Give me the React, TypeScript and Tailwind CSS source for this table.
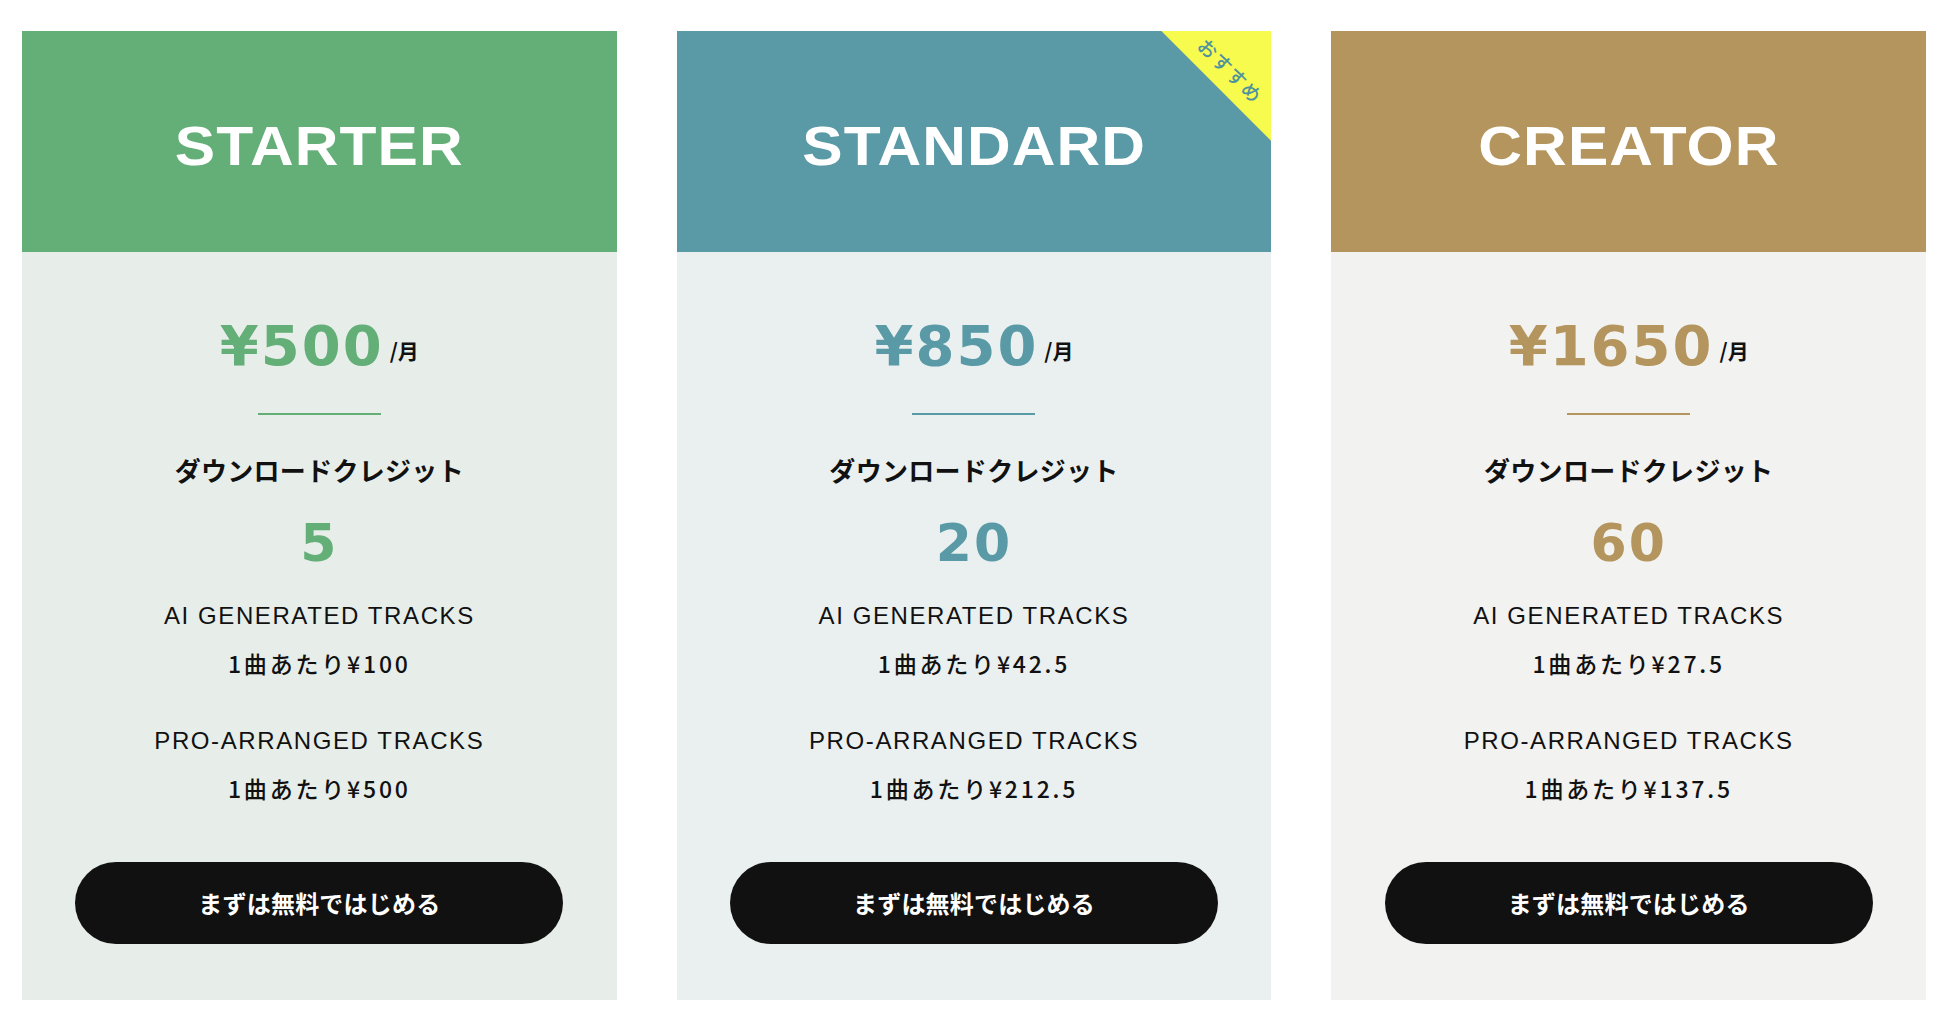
const plans = [
  {
    name: "STARTER",
    price: "¥500",
    credits: "5",
    ai: "1曲あたり¥100",
    pro: "1曲あたり¥500",
    head: "bg-[#64ae77]",
    body: "bg-[#e7eeea]",
    text: "text-[#64ae77]",
    line: "bg-[#64ae77]",
    badge: false,
  },
  {
    name: "STANDARD",
    price: "¥850",
    credits: "20",
    ai: "1曲あたり¥42.5",
    pro: "1曲あたり¥212.5",
    head: "bg-[#5a9aa6]",
    body: "bg-[#eaf0f0]",
    text: "text-[#5a9aa6]",
    line: "bg-[#5a9aa6]",
    badge: true,
  },
  {
    name: "CREATOR",
    price: "¥1650",
    credits: "60",
    ai: "1曲あたり¥27.5",
    pro: "1曲あたり¥137.5",
    head: "bg-[#b4955e]",
    body: "bg-[#f2f2f1]",
    text: "text-[#b4955e]",
    line: "bg-[#b4955e]",
    badge: false,
  },
];

const sans = "font-['Liberation_Sans','Noto_Sans_CJK_JP',sans-serif]";
const jp = "font-['Noto_Sans_CJK_JP',sans-serif]";
const wide = "font-['DejaVu_Sans',sans-serif]";

export default function App() {
  return (
    <div className="min-h-screen bg-white pl-[22px] pr-[24px] pt-[31px]">
      <div className="grid grid-cols-3 gap-[60px]">
        {plans.map((p) => (
          <div key={p.name} className="flex flex-col">
            {/* Header */}
            <div className={`relative flex h-[221px] items-center justify-center overflow-hidden ${p.head}`}>
              <h2 className={`${sans} scale-x-110 pt-[10px] text-[55px] font-bold leading-none tracking-[1px] text-white`}>
                {p.name}
              </h2>
              {p.badge && (
                <div className="absolute right-0 top-0 h-[110px] w-[110px] bg-[#f7fb4e] [clip-path:polygon(0_0,100%_0,100%_100%)]">
                  <span
                    className={`${jp} absolute left-[70px] top-[39px] -translate-x-1/2 -translate-y-1/2 rotate-45 whitespace-nowrap text-[19px] font-medium leading-none tracking-[1.5px] text-[#4f929f]`}
                  >
                    おすすめ
                  </span>
                </div>
              )}
            </div>

            {/* Body */}
            <div className={`flex flex-col items-center pb-[56px] pt-[66px] text-[#111] ${p.body}`}>
              <div className="flex items-end">
                <span className={`${wide} text-[56px] font-bold leading-[56px] tracking-[2px] ${p.text}`}>
                  {p.price}
                </span>
                <span className={`${jp} ml-[6px] pb-[13px] text-[21px] font-bold leading-[22px]`}>/月</span>
              </div>

              <div className={`mt-[39px] h-[2px] w-[123px] ${p.line}`} />

              <div className={`${jp} mt-[42px] text-[26px] font-semibold leading-[26px] tracking-[0.3px]`}>
                ダウンロードクレジット
              </div>

              <div className={`${wide} mt-[34px] text-[52px] font-bold leading-[52px] tracking-[2px] ${p.text}`}>
                {p.credits}
              </div>

              <div className={`${sans} mt-[35px] text-[24px] leading-[23px] tracking-[1.6px]`}>
                AI GENERATED TRACKS
              </div>
              <div className={`${jp} mt-[25px] text-[23px] font-medium leading-[22px] tracking-[2.8px]`}>
                {p.ai}
              </div>

              <div className={`${sans} mt-[55px] text-[24px] leading-[23px] tracking-[1.6px]`}>
                PRO-ARRANGED TRACKS
              </div>
              <div className={`${jp} mt-[25px] text-[23px] font-medium leading-[22px] tracking-[2.8px]`}>
                {p.pro}
              </div>

              <button
                className={`${jp} mt-[63px] flex h-[82px] w-[488px] items-center justify-center rounded-full bg-[#111] text-[24px] font-bold tracking-[0.2px] text-white`}
              >
                まずは無料ではじめる
              </button>
            </div>
          </div>
        ))}
      </div>
    </div>
  );
}
